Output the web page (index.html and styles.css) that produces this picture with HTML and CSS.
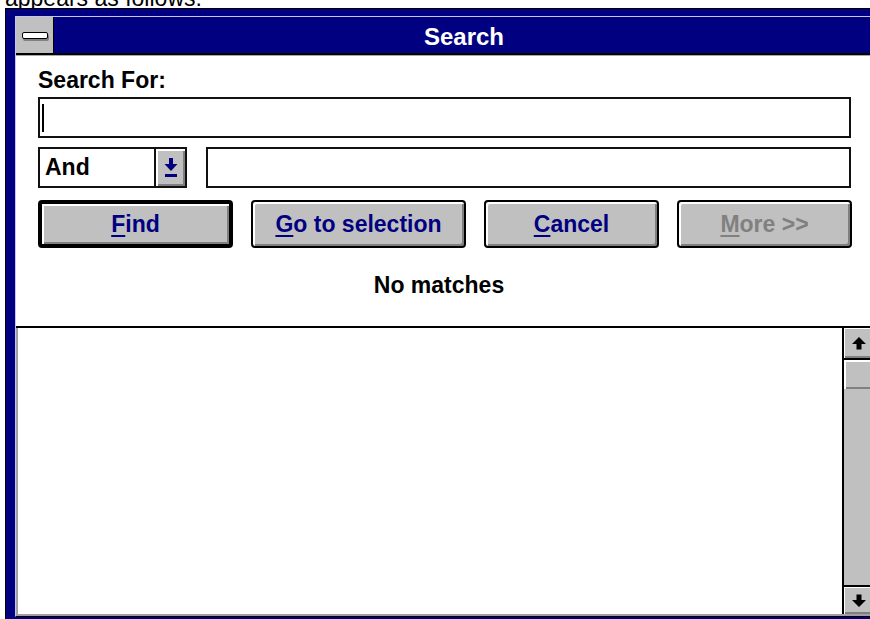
FILE: index.html
```html
<!DOCTYPE html>
<html lang="en">
<head>
<meta charset="utf-8">
<title>Search</title>
<link rel="stylesheet" href="styles.css">
</head>
<body>
  <div class="caption"><span>appears as follows:</span></div>

  <div class="window">
    <div class="frame-inner">
      <div class="titlebar">
        <div class="sysmenu"><span class="sysbar"></span></div>
        <div class="title">Search</div>
      </div>

      <div class="client">
        <div class="form">
          <div class="label">Search For:</div>
          <div class="field field-main"><span class="caret"></span></div>

          <div class="combo-row">
            <div class="combo">
              <span class="combo-text">And</span>
              <span class="combo-btn">
                <svg width="14" height="20" viewBox="0 0 14 20">
                  <rect x="5" y="0" width="4" height="7" fill="#000080"/>
                  <polygon points="0.5,6 13.5,6 7,13" fill="#000080"/>
                  <rect x="1" y="16" width="12" height="3" fill="#000080"/>
                </svg>
              </span>
            </div>
            <div class="field field-second"></div>
          </div>

          <div class="buttons">
            <div class="btn btn-default"><span><u>F</u>ind</span></div>
            <div class="btn"><span><u>G</u>o to selection</span></div>
            <div class="btn"><span><u>C</u>ancel</span></div>
            <div class="btn btn-disabled"><span><u>M</u>ore &gt;&gt;</span></div>
          </div>

          <div class="status">No matches</div>
        </div>

        <div class="results">
          <div class="listbox"></div>
          <div class="scrollbar">
            <div class="sb-btn sb-up">
              <svg width="14" height="13" viewBox="0 0 14 13">
                <path d="M7 0 L14 7 L9.5 7 L9.5 12.5 L4.5 12.5 L4.5 7 L0 7 Z" fill="#000"/>
              </svg>
            </div>
            <div class="sb-thumb"></div>
            <div class="sb-track"></div>
            <div class="sb-btn sb-down">
              <svg width="14" height="13" viewBox="0 0 14 13">
                <path d="M7 13 L14 6 L9.5 6 L9.5 0.5 L4.5 0.5 L4.5 6 L0 6 Z" fill="#000"/>
              </svg>
            </div>
          </div>
        </div>
      </div>
    </div>
  </div>
</body>
</html>
```

FILE: styles.css
```css
body {
  margin: 0;
  width: 870px;
  height: 619px;
  overflow: hidden;
  background: #fff;
  font-family: "Liberation Sans", Arial, sans-serif;
}

/* sentence above the dialog, mostly scrolled out of view */
.caption {
  height: 8px;
  overflow: hidden;
  display: flex;
  align-items: flex-end;
  padding-left: 5px;
  font-size: 23px;
  line-height: 20px;
  color: #000;
}

/* dialog frame */
.window {
  margin-left: 5px;
  width: 859px;
  border: 1px solid #000;
  background: #000080;
  padding: 7px 9px 9px 9px;
}

.frame-inner {
  border-top: 1px solid #c4c4ec;
  border-left: 1px solid #c4c4ec;
  border-bottom: 1px solid #000;
}

.titlebar {
  display: flex;
  height: 36px;
  background: #000080;
  border-bottom: 2px solid #000;
}

.sysmenu {
  width: 37px;
  flex: none;
  background: #c0c0c0;
  border-right: 1px solid #000;
  display: flex;
  align-items: center;
  justify-content: center;
}

.sysbar {
  width: 24px;
  height: 5px;
  background: #fff;
  border: 1px solid #000;
  border-radius: 2px;
  box-shadow: 1px 2px 0 #808080;
}

.title {
  flex: 1;
  text-align: center;
  color: #fff;
  font-weight: bold;
  font-size: 24px;
  line-height: 33px;
  padding-top: 3px;
}

.client {
  background: #fff;
  border-top: 1px solid #a8a8a8;
}

/* upper part: query controls */
.form {
  height: 270px;
  box-sizing: border-box;
  padding: 11px 23px 0 22px;
  font-weight: bold;
  font-size: 23px;
  color: #000;
}

.label {
  line-height: 26px;
}

.field {
  height: 41px;
  box-sizing: border-box;
  border: 2px solid #111;
  background: #fff;
  display: flex;
  align-items: center;
}

.field-main {
  margin-top: 4px;
}

.caret {
  width: 2px;
  height: 28px;
  background: #000;
  margin-left: 2px;
}

.combo-row {
  display: flex;
  gap: 19px;
  margin-top: 9px;
}

.combo {
  width: 149px;
  height: 41px;
  box-sizing: border-box;
  border: 2px solid #111;
  display: flex;
  flex: none;
}

.combo-text {
  flex: 1;
  padding-left: 5px;
  line-height: 37px;
}

.combo-btn {
  width: 29px;
  border-left: 2px solid #111;
  background: #c0c0c0;
  box-shadow: inset 2px 2px 0 #fff, inset -2px -2px 0 #808080;
  display: flex;
  align-items: center;
  justify-content: center;
}

.field-second {
  flex: 1;
}

.buttons {
  display: grid;
  grid-template-columns: 195px 215px 175px 175px;
  column-gap: 18px;
  margin-top: 12px;
}

.btn {
  height: 48px;
  box-sizing: border-box;
  border: 2px solid #000;
  border-radius: 4px;
  background: #c0c0c0;
  box-shadow: inset 2px 2px 0 #fff, inset -2px -2px 0 #808080;
  display: flex;
  align-items: center;
  justify-content: center;
  color: #000080;
}

.btn-default {
  border-width: 4px;
}

.btn-disabled {
  color: #808080;
}

.btn u {
  text-decoration-thickness: 2px;
  text-underline-offset: 3px;
}

.status {
  margin-top: 24px;
  line-height: 26px;
  text-align: center;
  padding-right: 11px;
}

/* lower part: result list with scroll bar */
.results {
  display: flex;
  height: 290px;
  box-sizing: border-box;
  border-top: 2px solid #000;
  border-bottom: 2px solid #a0a0a0;
}

.listbox {
  flex: 1;
  background: #fff;
  border-left: 2px solid #a0a0a0;
}

.scrollbar {
  width: 30px;
  flex: none;
  border-left: 2px solid #000;
  display: flex;
  flex-direction: column;
  background: #c0c0c0;
}

.sb-btn {
  height: 30px;
  flex: none;
  background: #c0c0c0;
  box-shadow: inset 1px 1px 0 #fff, inset -2px -2px 0 #808080;
  display: flex;
  align-items: center;
  justify-content: center;
}

.sb-up {
  border-bottom: 2px solid #000;
}

.sb-down {
  height: 27px;
  border-top: 2px solid #000;
}

.sb-thumb {
  height: 29px;
  flex: none;
  background: #c0c0c0;
  box-shadow: inset 2px 2px 0 #fff, inset -2px -2px 0 #808080;
}

.sb-track {
  flex: 1;
}
```
